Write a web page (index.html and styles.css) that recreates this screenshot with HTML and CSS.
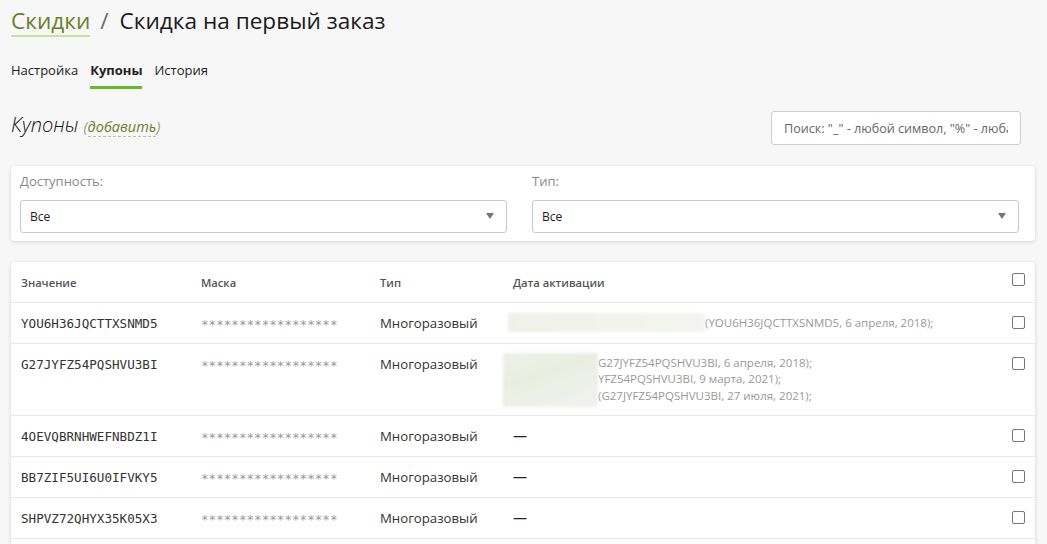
FILE: index.html
```html
<!DOCTYPE html>
<html lang="ru">
<head>
<meta charset="utf-8">
<link rel="stylesheet" href="styles.css">
</head>
<body>
<div class="page">
  <h1 class="title"><a class="crumb" href="#">Скидки</a><span class="sep">/</span><span>Скидка на первый заказ</span></h1>
  <nav class="tabs">
    <a class="tab" href="#">Настройка</a>
    <a class="tab active" href="#">Купоны</a>
    <a class="tab" href="#">История</a>
  </nav>
  <div class="section-head">
    <h2 class="section-title">Купоны <a class="add" href="#"><span class="paren">(</span><span class="add-link">добавить</span><span class="paren">)</span></a></h2>
    <input class="search" type="text" placeholder='Поиск: "_" - любой символ, "%" - любая последовательность'>
  </div>
  <div class="card filters">
    <div class="field">
      <div class="label">Доступность:</div>
      <div class="select"><span>Все</span><span class="arrow"></span></div>
    </div>
    <div class="field">
      <div class="label">Тип:</div>
      <div class="select"><span>Все</span><span class="arrow"></span></div>
    </div>
  </div>
  <div class="card table-card">
    <table class="grid">
      <thead>
        <tr>
          <th class="c-val">Значение</th>
          <th class="c-mask">Маска</th>
          <th class="c-type">Тип</th>
          <th class="c-date">Дата активации</th>
          <th class="c-chk"><span class="chk"></span></th>
        </tr>
      </thead>
      <tbody>
        <tr>
          <td class="code">YOU6H36JQCTTXSNMD5</td>
          <td class="mask">******************</td>
          <td class="type">Многоразовый</td>
          <td class="date"><div class="act"><span class="blur b1"></span><span class="act-text">(YOU6H36JQCTTXSNMD5, 6 апреля, 2018);</span></div></td>
          <td class="c-chk"><span class="chk"></span></td>
        </tr>
        <tr>
          <td class="code">G27JYFZ54PQSHVU3BI</td>
          <td class="mask">******************</td>
          <td class="type">Многоразовый</td>
          <td class="date">
            <div class="act multi"><span class="blur b2"></span>
              <div class="lines">
                <div class="act-text">G27JYFZ54PQSHVU3BI, 6 апреля, 2018);</div>
                <div class="act-text">YFZ54PQSHVU3BI, 9 марта, 2021);</div>
                <div class="act-text">(G27JYFZ54PQSHVU3BI, 27 июля, 2021);</div>
              </div>
            </div>
          </td>
          <td class="c-chk"><span class="chk"></span></td>
        </tr>
        <tr>
          <td class="code">4OEVQBRNHWEFNBDZ1I</td>
          <td class="mask">******************</td>
          <td class="type">Многоразовый</td>
          <td class="date dash">—</td>
          <td class="c-chk"><span class="chk"></span></td>
        </tr>
        <tr>
          <td class="code">BB7ZIF5UI6U0IFVKY5</td>
          <td class="mask">******************</td>
          <td class="type">Многоразовый</td>
          <td class="date dash">—</td>
          <td class="c-chk"><span class="chk"></span></td>
        </tr>
        <tr>
          <td class="code">SHPVZ72QHYX35K05X3</td>
          <td class="mask">******************</td>
          <td class="type">Многоразовый</td>
          <td class="date dash">—</td>
          <td class="c-chk"><span class="chk"></span></td>
        </tr>
        <tr>
          <td class="code">&nbsp;</td>
          <td class="mask"></td>
          <td class="type"></td>
          <td class="date"></td>
          <td class="c-chk"></td>
        </tr>
      </tbody>
    </table>
  </div>
</div>
</body>
</html>
```

FILE: styles.css
```css
* { box-sizing: border-box; }
html, body { margin: 0; padding: 0; }
body {
  background: #f7f7f7;
  font-family: "Open Sans", "Noto Sans", sans-serif;
  color: #222;
  overflow: hidden;
  height: 544px;
}
.page { padding: 0 12px 0 11px; }

.title {
  margin: 0;
  padding-top: 5px;
  font-size: 22.6px;
  font-weight: 400;
  line-height: 32px;
  color: #1a1a1a;
  display: flex;
  align-items: baseline;
}
.crumb {
  color: #6b7f2a;
  text-decoration: none;
  border-bottom: 2px solid #c8e29a;
  line-height: 29px;
}
.sep { color: #6a6a6a; margin: 0 11px 0 10px; }

.tabs {
  display: flex;
  gap: 12px;
  margin-top: 19px;
  height: 33px;
}
.tab {
  color: #222;
  text-decoration: none;
  font-size: 13px;
  line-height: 20px;
  padding-top: 4px;
  border-bottom: 3px solid transparent;
  height: 33px;
}
.tab.active { font-weight: 700; border-bottom-color: #66bb22; }

.section-head {
  display: flex;
  justify-content: space-between;
  align-items: flex-start;
  margin-top: 22px;
}
.section-title {
  margin: 0;
  padding-top: 2px;
  font-size: 20px;
  font-weight: 300;
  font-style: italic;
  line-height: 24px;
  color: #111;
}
.add { text-decoration: none; font-size: 14.5px; font-weight: 400; }
.paren { color: #9a9a7a; }
.add-link { color: #6b7f2a; border-bottom: 1px dashed #b9c49a; }

.search {
  width: 250px;
  height: 34px;
  border: 1px solid #cfcfcf;
  border-radius: 3px;
  background: #fff;
  padding: 0 12px;
  font-family: inherit;
  font-size: 12.6px;
  margin-right: 14px;
}
.search::placeholder { color: #666; }

.card {
  background: #fff;
  border-radius: 4px;
  box-shadow: 0 1px 4px rgba(0,0,0,0.14);
}
.filters {
  margin-top: 21px;
  display: grid;
  grid-template-columns: 1fr 1fr;
  gap: 25px;
  padding: 7px 16px 8px 9px;
}
.label {
  font-size: 13px;
  color: #8a8a8a;
  line-height: 16px;
  height: 27px;
}
.select {
  height: 33px;
  border: 1px solid #c9c9c9;
  border-radius: 3px;
  display: flex;
  align-items: center;
  justify-content: space-between;
  padding: 0 12px 0 9px;
  font-size: 12px;
  color: #222;
}
.arrow {
  width: 0; height: 0;
  border-left: 4px solid transparent;
  border-right: 4px solid transparent;
  border-top: 6px solid #777;
  margin-top: -2px;
}

.table-card { margin-top: 21px; overflow: hidden; }
.grid {
  width: 100%;
  border-collapse: collapse;
}
.grid th, .grid td {
  text-align: left;
  vertical-align: top;
  border-bottom: 1px solid #e8e8e8;
  padding: 0;
}
.grid th {
  font-size: 11.2px;
  font-weight: 600;
  color: #555;
  height: 40px;
  padding-top: 13px;
}
.grid td { height: 41px; padding-top: 11px; }
.grid td.date { padding-bottom: 8px; }
.c-val { width: 190px; padding-left: 10px !important; }
.code { padding-left: 10px !important; font-family: "DejaVu Sans Mono", monospace; font-size: 12.6px; color: #333; line-height: 16px; padding-top: 13px !important; }
.c-mask, .mask { width: 179px; }
.mask { font-family: "DejaVu Sans Mono", monospace; font-size: 12.6px; color: #999; line-height: 16px; padding-top: 14px !important; }
.c-type, .type { width: 133px; }
.type { font-size: 13.2px; color: #333; line-height: 18px; }
.date { font-size: 11.5px; color: #999; }
.dash { color: #222; font-size: 14px; line-height: 18px; padding-top: 11px !important; }
.grid .c-chk { width: 34px; padding-right: 10px; line-height: 0; }
.grid th.c-chk { padding-top: 11px; }
.grid td.c-chk { padding-top: 13px; }
.chk {
  display: block;
  margin-left: auto;
  width: 13px; height: 13px;
  border: 1px solid #777;
  border-radius: 2px;
  background: #fff;
}

.act { display: flex; align-items: flex-start; margin-left: -5px; }
.act .act-text { line-height: 18px; }
.blur {
  display: block;
  background: linear-gradient(90deg, #eef0e9, #f1f3ec 60%, #f3f4ef);
  filter: blur(1.5px);
  flex-shrink: 0;
}
.b1 { width: 197px; height: 19px; margin-top: -1px; }
.multi { margin-left: -10px; }
.b2 { width: 95px; height: 54px; margin-top: -2px; background: linear-gradient(160deg, #eef0e9, #e9eee0 40%, #f1f2ef); }
.lines .act-text { line-height: 16.5px; }
```
